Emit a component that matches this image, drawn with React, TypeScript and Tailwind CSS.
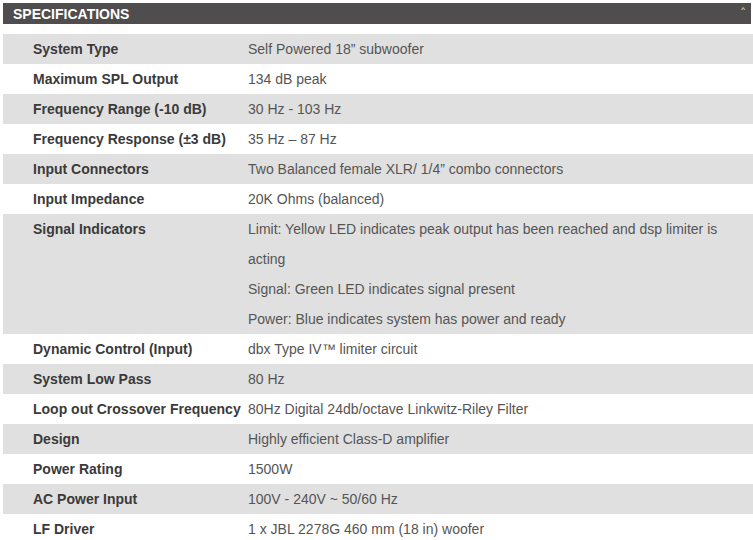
const specs: { label: string; values: string[] }[] = [
  { label: "System Type", values: ["Self Powered 18\u201d subwoofer"] },
  { label: "Maximum SPL Output", values: ["134 dB peak"] },
  { label: "Frequency Range (-10 dB)", values: ["30 Hz - 103 Hz"] },
  { label: "Frequency Response (\u00b13 dB)", values: ["35 Hz \u2013 87 Hz"] },
  { label: "Input Connectors", values: ["Two Balanced female XLR/ 1/4\u201d combo connectors"] },
  { label: "Input Impedance", values: ["20K Ohms (balanced)"] },
  {
    label: "Signal Indicators",
    values: [
      "Limit: Yellow LED indicates peak output has been reached and dsp limiter is acting",
      "Signal: Green LED indicates signal present",
      "Power: Blue indicates system has power and ready",
    ],
  },
  { label: "Dynamic Control (Input)", values: ["dbx Type IV\u2122 limiter circuit"] },
  { label: "System Low Pass", values: ["80 Hz"] },
  { label: "Loop out Crossover Frequency", values: ["80Hz Digital 24db/octave Linkwitz-Riley Filter"] },
  { label: "Design", values: ["Highly efficient Class-D amplifier"] },
  { label: "Power Rating", values: ["1500W"] },
  { label: "AC Power Input", values: ["100V - 240V ~ 50/60 Hz"] },
  { label: "LF Driver", values: ["1 x JBL 2278G 460 mm (18 in) woofer"] },
];

export default function App() {
  return (
    <div className="w-[753px] h-[540px] overflow-hidden bg-white font-['Liberation_Sans',Arial,sans-serif] text-[14px]">
      <div className="mt-[3px] ml-[3px] w-[748px] h-[21px] bg-[#4f4d4d] flex items-center justify-between pl-[10px] pr-[6px]">
        <span className="text-white font-bold text-[14px] leading-none">SPECIFICATIONS</span>
        <span className="text-white text-[8px] leading-none self-start mt-[3px]">^</span>
      </div>

      <div className="mt-[10px] ml-[3px] w-[750px]">
        {specs.map((row, i) => (
          <div
            key={row.label}
            className={`flex leading-[30px] ${i % 2 === 0 ? "bg-[#e0e0e0]" : "bg-white"}`}
          >
            <div className="w-[242px] shrink-0 pl-[30px] font-bold text-[#3a3a3a] whitespace-nowrap">
              {row.label}
            </div>
            <div className="flex-1 pl-[3px] pr-[2px] text-[#555555]">
              {row.values.map((v) => (
                <div key={v}>{v}</div>
              ))}
            </div>
          </div>
        ))}
      </div>
    </div>
  );
}
